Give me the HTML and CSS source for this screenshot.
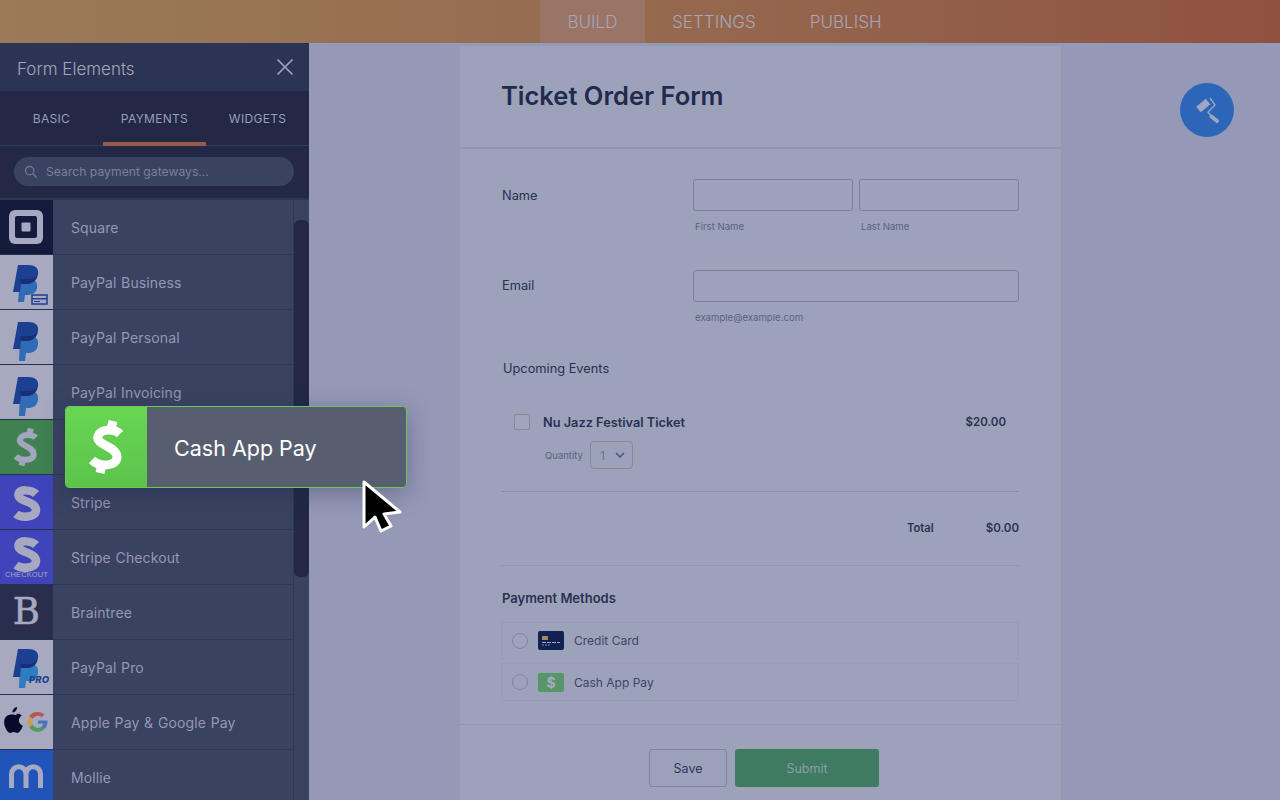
FILE: index.html
```html
<!DOCTYPE html>
<html lang="en">
<head>
<meta charset="utf-8">
<title>Ticket Order Form</title>
<link rel="stylesheet" href="styles.css">
</head>
<body>
<header class="topbar">
  <nav class="topnav">
    <a class="topnav-item is-active">BUILD</a>
    <a class="topnav-item">SETTINGS</a>
    <a class="topnav-item">PUBLISH</a>
  </nav>
</header>
<div class="workspace">
  <aside class="sidebar">
    <div class="side-head">
      <span class="side-title">Form Elements</span>
      <svg class="close-icon" viewBox="0 0 18 18"><path d="M1.500 1.500l15 15M16.500 1.500l-15 15"/></svg>
    </div>
    <div class="tabs">
      <div class="tab">BASIC</div>
      <div class="tab is-active">PAYMENTS</div>
      <div class="tab">WIDGETS</div>
    </div>
    <div class="search-wrap">
      <div class="search">
        <svg class="search-icon" viewBox="0 0 16 16"><circle cx="6.500" cy="6.500" r="4.800"/><path d="M10 10l4.600 4.600"/></svg>
        <span>Search payment gateways...</span>
      </div>
    </div>
    <div class="list-wrap">
      <ul class="list">
        <li class="row"><div class="ico ico-square"><svg viewBox="0 0 53 55" width="53" height="55"><rect x="9" y="10" width="34" height="34" rx="6" fill="#a6a9c0"/><rect x="15" y="16" width="22" height="22" rx="2" fill="#151b3c"/><rect x="21.500" y="22.500" width="9" height="9" rx="1" fill="#a6a9c0"/></svg></div><span>Square</span></li>
        <li class="row"><div class="ico ico-light"><svg viewBox="0 0 53 55" width="53" height="55"><path d="M20 24h8c6 0 10 2 9 9-1 5-5 7-10 7h-2l-1 7h-6z" fill="#2f6cb5"/><path d="M18 10h10c7 0 11 3 10 9-1 7-6 10-12 10h-5l-1 8h-7l5-27z" fill="#1c3f8f"/><path d="M20 24h8c4 0 8-1 9-5 .6 4-3 10-11 10h-5z" fill="#182f78"/><rect x="32" y="40" width="15" height="9" fill="#a6a9c0" stroke="#1c3f8f" stroke-width="1.500"/><rect x="32" y="43" width="15" height="1.500" fill="#1c3f8f"/><rect x="34" y="46" width="6" height="1" fill="#1c3f8f"/></svg></div><span>PayPal Business</span></li>
        <li class="row"><div class="ico ico-light"><svg viewBox="0 0 53 55" width="53" height="55"><path d="M20 26h8c6 0 11 1 10 9-1 6-5 8-10 8h-2l-1 8h-6z" fill="#2f6cb5"/><path d="M18 12h10c7 0 11 3 10 9-1 7-6 10-12 10h-5l-1 8h-7l5-27z" fill="#1c3f8f"/><path d="M20 26h8c4 0 8-1 9-5 .6 4-3 10-11 10h-5z" fill="#182f78"/></svg></div><span>PayPal Personal</span></li>
        <li class="row"><div class="ico ico-light"><svg viewBox="0 0 53 55" width="53" height="55"><path d="M20 26h8c6 0 11 1 10 9-1 6-5 8-10 8h-2l-1 8h-6z" fill="#2f6cb5"/><path d="M18 12h10c7 0 11 3 10 9-1 7-6 10-12 10h-5l-1 8h-7l5-27z" fill="#1c3f8f"/><path d="M20 26h8c4 0 8-1 9-5 .6 4-3 10-11 10h-5z" fill="#182f78"/></svg></div><span>PayPal Invoicing</span></li>
        <li class="row"><div class="ico ico-cash"><svg class="cash-mark" viewBox="0 0 40 56" width="29" height="40"><path d="M33 15C28 10 14 9 11 17 8 26 30 27 30 38 30 48 12 48 5 41"/><path d="M24 10l2-8M15 46l-2 8"/></svg></div><span>Cash App Pay</span></li>
        <li class="row"><div class="ico ico-stripe"><svg class="stripe-mark" viewBox="0 0 53 55" width="53" height="55"><path d="M36 19C32 15 18.500 13 18.500 20 18.500 27 36 26 36 35 36 43 21 43 16 39"/></svg></div><span>Stripe</span></li>
        <li class="row"><div class="ico ico-stripe"><svg class="stripe-mark" viewBox="0 0 53 55" width="53" height="55"><path d="M36 15C32 11 18.500 9 18.500 16 18.500 23 36 22 36 31 36 39 21 39 16 35"/></svg><span class="checkout">CHECKOUT</span></div><span>Stripe Checkout</span></li>
        <li class="row"><div class="ico ico-braintree"><span class="glyph-b">B</span></div><span>Braintree</span></li>
        <li class="row"><div class="ico ico-light"><svg viewBox="0 0 53 55" width="53" height="55"><path d="M20 24h8c6 0 11 1 10 9-1 6-5 8-10 8h-2l-1 7h-6z" fill="#2f7cc0"/><path d="M18 9h10c7 0 11 3 10 9-1 7-6 10-12 10h-5l-1 9h-7l5-28z" fill="#1c3f8f"/><path d="M20 24h8c4 0 8-1 9-5 .6 4-3 9-11 9h-5z" fill="#182f78"/></svg><span class="pro">PRO</span></div><span>PayPal Pro</span></li>
        <li class="row"><div class="ico ico-light"><svg viewBox="0 0 53 55" width="53" height="55"><g transform="translate(-6 -1) scale(1.180)"><path d="M19 18c-1 .1-2-.6-2.600-.6-1.700 0-3.300-.1-5 .9-3 1.800-3.300 5.800-2.200 9 .8 2.400 2.500 5.700 4.500 5.700 1.100 0 1.600-.8 3-.8s1.900.8 3 .8c2.200 0 4-3.600 4.800-6-2.300-1-3.400-2.700-3.400-4.700 0-1.800 1-3 2.400-3.900-1-1.500-2.800-1.900-4.500-1.500zM19.600 11c-2 .2-4 2-4 4.700 2.100.1 4-2 4-4.700z" fill="#070b2b"/></g><path d="M38 17a9.800 9.800 0 0 1 6.500 2.500l-2.800 2.800a6 6 0 0 0-9.100 1.500l-3.300-2.600A10 10 0 0 1 38 17z" fill="#b5584e"/><path d="M29.300 21.700l3.300 2.600a6 6 0 0 0 0 5.400l-3.300 2.600a10 10 0 0 1 0-10.600z" fill="#c9a14c"/><path d="M29.300 32.300l3.300-2.600a6 6 0 0 0 9 1.900l3 2.400A10 10 0 0 1 29.300 32.300z" fill="#4f9a5c"/><path d="M38 25.500h9.500c.3 3.400-.7 6.500-2.900 8.500l-3-2.400a4.800 4.800 0 0 0 1.800-2.800H38z" fill="#4a74c0"/></svg></div><span>Apple Pay &amp; Google Pay</span></li>
        <li class="row"><div class="ico ico-mollie"><svg viewBox="0 0 53 55" width="53" height="55"><path d="M11.500 38V24a7.250 7.250 0 0 1 14.500 0v14M26 24a7.250 7.250 0 0 1 14.500 0v14" fill="none" stroke="#a6a9c0" stroke-width="5"/></svg></div><span>Mollie</span></li>
      </ul>
      <div class="scroll-track"><div class="scroll-thumb"></div></div>
    </div>
  </aside>

  <main class="canvas">
    <form class="form">
      <div class="form-head"><h1>Ticket Order Form</h1></div>
      <div class="form-body">
        <div class="field field-name">
          <div class="label">Name</div>
          <div class="inputs">
            <div class="subfield"><div class="input"></div><div class="hint">First Name</div></div>
            <div class="subfield"><div class="input"></div><div class="hint">Last Name</div></div>
          </div>
        </div>
        <div class="field field-email">
          <div class="label">Email</div>
          <div class="inputs">
            <div class="subfield"><div class="input"></div><div class="hint">example@example.com</div></div>
          </div>
        </div>
        <div class="events-title">Upcoming Events</div>
        <div class="product">
          <div class="checkbox"></div>
          <div class="product-name">Nu Jazz Festival Ticket</div>
          <div class="product-price">$20.00</div>
        </div>
        <div class="qty">
          <span>Quantity</span>
          <div class="select"><span>1</span><svg viewBox="0 0 10 6" width="10" height="6"><path d="M1 1l4 4 4-4"/></svg></div>
        </div>
        <div class="rule rule-a"></div>
        <div class="total"><b class="total-label">Total</b><b class="total-value">$0.00</b></div>
        <div class="rule rule-b"></div>
        <div class="pay-title">Payment Methods</div>
        <div class="option">
          <div class="radio"></div>
          <svg class="opt-icon" viewBox="0 0 26 19" width="26" height="19"><rect width="26" height="19" rx="2" fill="#112152"/><rect x="4" y="5" width="6" height="4" rx=".5" fill="#a68a5e"/><path d="M4 11.500h18" stroke="#a2a6bf" stroke-width="1" stroke-dasharray="4 1"/><path d="M4 14h8" stroke="#8288a8" stroke-width="1" stroke-dasharray="2 1"/></svg>
          <span>Credit Card</span>
        </div>
        <div class="option">
          <div class="radio"></div>
          <div class="opt-cash">$</div>
          <span>Cash App Pay</span>
        </div>
      </div>
      <div class="form-foot">
        <div class="btn btn-save">Save</div>
        <div class="btn btn-submit">Submit</div>
      </div>
    </form>
  </main>
</div>

<div class="fab">
  <svg viewBox="0 0 32 32" width="32" height="32"><path d="M7.500 15.500L17 7.500" fill="none" stroke="#a1a6c0" stroke-width="7"/><path d="M19 4l5 7-7 7 3 4" fill="none" stroke="#a1a6c0" stroke-width="1.300"/><path d="M20.500 22.500l5.500 4.500" fill="none" stroke="#a1a6c0" stroke-width="4" stroke-linecap="round"/></svg>
</div>

<div class="ghost">
  <div class="ghost-icon"><svg class="ghost-mark" viewBox="0 0 40 56" width="40" height="56"><path d="M33 15C28 10 14 9 11 17 8 26 30 27 30 38 30 48 12 48 5 41"/><path d="M24 10l2-8M15 46l-2 8"/></svg></div>
  <div class="ghost-label">Cash App Pay</div>
</div>

<svg class="cursor" viewBox="0 0 44 58" width="44" height="58"><path d="M4 4L4 49 15 39 21 53 31 48 24 36 40 34Z" fill="#000" stroke="#fff" stroke-width="3" stroke-linejoin="round"/></svg>
</body>
</html>
```

FILE: styles.css
```css
* { box-sizing: border-box; }
html, body { margin: 0; height: 100%; }
body {
  width: 1280px;
  height: 800px;
  overflow: hidden;
  position: relative;
  font-family: Inter, "Liberation Sans", sans-serif;
  background: #9599b8;
  display: flex;
  flex-direction: column;
}

/* top bar */
.topbar {
  height: 43px;
  flex: none;
  background: linear-gradient(90deg, #9a7a57 0%, #966a4f 50%, #8f5240 100%);
  display: flex;
  padding-left: 540px;
}
.topnav { display: flex; height: 43px; gap: 54px; }
.topnav-item {
  display: flex;
  align-items: center;
  justify-content: center;
  font-size: 17.100px;
  font-weight: 300;
  color: #a5a6bb;
}
.topnav-item.is-active { background: #9a7465; width: 105px; margin-right: -27px; }

.workspace { flex: 1; display: flex; min-height: 0; }

/* sidebar */
.sidebar { width: 309px; flex: none; display: flex; flex-direction: column; background: #222846; }
.side-head {
  height: 48px;
  flex: none;
  background: #2b3454;
  display: flex;
  align-items: center;
  justify-content: space-between;
  padding: 0 15px 0 17px;
}
.side-title { font-size: 17px; font-weight: 300; color: #a2a6bd; padding-top: 3px; }
.close-icon { width: 18px; height: 18px; }
.close-icon path { stroke: #a2a6bd; stroke-width: 1.600; fill: none; }
.tabs { height: 55px; flex: none; display: flex; border-bottom: 1px solid #333c5c; }
.tab {
  width: 103px;
  font-size: 12px;
  color: #9a9eb8;
  display: flex;
  align-items: center;
  justify-content: center;
  padding-top: 1px;
  letter-spacing: .3px;
}
.tab.is-active { border-bottom: 4px solid #9a5c4a; margin-bottom: -1px; padding-top: 3px; }
.search-wrap { height: 54px; flex: none; padding: 11px 15px 0 14px; border-bottom: 2px solid #2d3454; }
.search {
  height: 29px;
  border-radius: 15px;
  background: #3a4262;
  display: flex;
  align-items: center;
  padding-left: 10px;
  gap: 8px;
  font-size: 12.200px;
  color: #7a7f9c;
}
.search-icon { width: 14px; height: 14px; fill: none; stroke: #6f7594; stroke-width: 1.500; }

.list-wrap { flex: 1; display: flex; min-height: 0; overflow: hidden; }
.list { list-style: none; margin: 0; padding: 0; flex: 1; background: #3a4262; }
.row {
  height: 55px;
  display: flex;
  align-items: center;
  gap: 18px;
  font-size: 14px;
  color: #9498b2;
  letter-spacing: .12px;
  word-spacing: .6px;
  border-bottom: 1px solid #2f3756;
}
.ico {
  position: relative;
  width: 53px;
  height: 55px;
  flex: none;
  margin-bottom: -1px;
  display: flex;
  align-items: center;
  justify-content: center;
  overflow: hidden;
  border-bottom: 1px solid #2a3150;
}
.ico svg { display: block; flex: none; }
.ico-square { background: #151b3c; }
.ico-light { background: #a6a9c0; }
.ico-cash { background: #3f8150; }
.ico-stripe { background: #3f44ba; }
.ico-braintree { background: #2a2e4e; }
.ico-mollie { background: #2154b8; }
.cash-mark path { fill: none; stroke: #a1a5bd; stroke-width: 8.500; }
.stripe-mark path { fill: none; stroke: #a6a9c0; stroke-width: 8.500; }
.checkout {
  position: absolute;
  left: 0;
  right: 0;
  bottom: 5px;
  text-align: center;
  font-size: 7.500px;
  color: #a6a9c0;
  line-height: 9px;
  font-family: "Liberation Sans", sans-serif;
}
.glyph-b { font-family: "DejaVu Serif", serif; font-size: 37px; line-height: 40px; color: #a6a9c0; -webkit-text-stroke: .6px #a6a9c0; }
.pro {
  position: absolute;
  left: 29px;
  bottom: 9px;
  font-size: 9.500px;
  line-height: 10px;
  font-weight: 800;
  font-style: italic;
  color: #1c3f8f;
}
.scroll-track { width: 16px; flex: none; background: #3a4262; border-left: 1px solid #2f3756; padding-top: 20px; }
.scroll-thumb { width: 15px; height: 357px; background: #222846; border-radius: 6px; }

/* form */
.canvas { flex: 1; display: flex; padding: 3px 0 0 151px; min-width: 0; }
.form {
  width: 601px;
  height: 754px;
  flex: none;
  background: #9da2bb;
  display: flex;
  flex-direction: column;
}
.form-head { height: 103px; flex: none; padding: 35px 0 0 41px; border-bottom: 2px solid #9195b2; }
.form-head h1 {
  margin: 0;
  font-size: 25.500px;
  line-height: 30px;
  font-weight: 600;
  color: #222a4e;
}
.form-body { flex: 1; padding: 30px 42px 0 41px; }
.field { display: flex; }
.label { width: 192px; flex: none; font-size: 12.800px; color: #2a3152; line-height: 32px; padding-left: 1px; }
.field-name .label { padding-top: 1px; }
.inputs { display: flex; gap: 6px; flex: 1; }
.subfield { flex: 1; }
.input { height: 32px; border: 1px solid #7b7f9f; border-radius: 3px; }
.hint { font-size: 9.600px; color: #5b6183; margin: 10px 0 0 2px; line-height: 12px; }
.field-email { margin-top: 37px; }
.events-title { margin: 35px 0 0 2px; font-size: 12.800px; line-height: 20px; color: #2a3152; }
.product { display: flex; align-items: center; margin-top: 35px; height: 16px; padding-left: 13px; }
.checkbox { width: 16px; height: 16px; border: 1px solid #83889f; border-radius: 2px; background: #a0a4bd; }
.product-name { margin-left: 13px; font-size: 12.750px; font-weight: 600; color: #2a3152; }
.product-price { margin-left: auto; margin-right: 13px; font-size: 11.500px; font-weight: 600; color: #2a3152; }
.qty { display: flex; align-items: center; margin: 11px 0 0 44px; height: 28px; font-size: 9.500px; color: #5b6183; gap: 7px; }
.select {
  width: 43px;
  height: 28px;
  border: 1px solid #83889f;
  border-radius: 4px;
  display: flex;
  align-items: center;
  justify-content: space-between;
  padding: 0 7px 0 9px;
  font-size: 12px;
  color: #6d7293;
}
.select svg { fill: none; stroke: #4d5376; stroke-width: 1.500; }
.rule { height: 1px; background: #8a8eac; }
.rule-a { margin-top: 22px; }
.total { display: flex; justify-content: flex-end; align-items: center; height: 14px; margin-top: 29px; font-size: 11.200px; color: #2a3152; }
.total b { font-weight: 600; }
.total-label { margin-right: 52px; }
.total-value { font-size: 11.500px; }
.rule-b { margin-top: 30px; background: #9195b2; }
.pay-title { margin-top: 24px; padding-left: 1px; font-size: 13px; line-height: 16px; font-weight: 600; color: #2a3152; }
.option {
  display: flex;
  align-items: center;
  height: 37px;
  margin-top: 16px;
  border: 1px solid #979bb7;
  border-radius: 2px;
  padding-left: 10px;
  font-size: 12px;
  color: #3f4566;
}
.option + .option { margin-top: 4px; height: 38px; }
.radio { width: 16px; height: 16px; border: 1px solid #7f84a2; border-radius: 50%; margin-right: 10px; }
.opt-icon { margin-right: 10px; }
.opt-cash {
  width: 26px;
  height: 19px;
  margin-right: 10px;
  border-radius: 2px;
  background: #579668;
  color: #a6aac2;
  font-weight: 700;
  font-size: 14px;
  display: flex;
  align-items: center;
  justify-content: center;
}
.form-foot {
  height: 76px;
  flex: none;
  border-top: 1px solid #9195b2;
  display: flex;
  justify-content: center;
  gap: 8px;
  padding-top: 24px;
  padding-left: 6px;
}
.btn { height: 38px; display: flex; align-items: center; justify-content: center; padding-left: 1px; font-size: 12.500px; border-radius: 3px; }
.btn-save { width: 78px; border: 1px solid #7f84a2; color: #2f3658; }
.btn-submit { width: 144px; background: #3f7b60; color: #8c9bab; }

/* floating */
.fab {
  position: absolute;
  left: 1180px;
  top: 83px;
  width: 54px;
  height: 54px;
  border-radius: 50%;
  background: #2d66b9;
  display: flex;
  align-items: center;
  justify-content: center;
}
.ghost {
  position: absolute;
  left: 65px;
  top: 406px;
  width: 342px;
  height: 82px;
  display: flex;
  border: 1px solid #63cc52;
  border-radius: 4px;
  background: #575e70;
  box-shadow: 0 6px 24px rgba(30, 35, 70, .35);
  overflow: hidden;
}
.ghost-icon {
  width: 81px;
  flex: none;
  background: linear-gradient(#68d653, #5cc34c);
  display: flex;
  align-items: center;
  justify-content: center;
}
.ghost-mark path { fill: none; stroke: #fff; stroke-width: 9; }
.ghost-label { padding: 2px 0 0 27px; display: flex; align-items: center; font-size: 21.500px; color: #fff; }
.cursor { position: absolute; left: 360px; top: 478px; }
```
